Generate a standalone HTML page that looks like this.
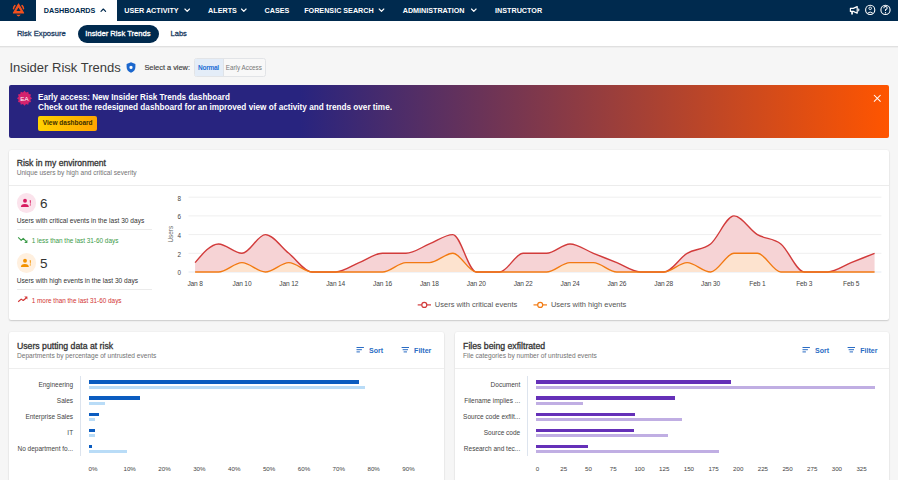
<!DOCTYPE html>
<html><head><meta charset="utf-8">
<style>
html,body{margin:0;padding:0;}
body{width:898px;height:480px;overflow:hidden;position:relative;background:#f6f6f6;font-family:"Liberation Sans", sans-serif;}
.t{position:absolute;white-space:nowrap;line-height:1;}
.r{position:absolute;}
svg.r{overflow:visible;}
</style></head><body>
<div class="r" style="left:0.00px;top:0.00px;width:898.00px;height:21.00px;background:#002a4e;"></div>
<div class="r" style="left:35.60px;top:0.00px;width:81.00px;height:21.00px;background:#fff;"></div>
<svg class="r" style="left:0;top:0" width="40" height="21" viewBox="0 0 40 21">
<path d="M18.5 3.9 L23.6 13.0 L13.4 13.0 Z" fill="#f4511e" stroke="#f4511e" stroke-width="1.1" stroke-linejoin="round"/>
<path d="M18.5 7.5 L20.6 11.1 L16.4 11.1 Z" fill="#002a4e"/>
<path d="M14.9 5.6 Q13.5 7.0 13.5 8.8" fill="none" stroke="#f4511e" stroke-width="1.5" stroke-linecap="round"/>
<path d="M22.1 5.6 Q23.5 7.0 23.5 8.8" fill="none" stroke="#f4511e" stroke-width="1.5" stroke-linecap="round"/>
<path d="M16.4 14.6 Q18.5 15.1 20.6 14.6 Q20.1 16.4 18.5 16.4 Q16.9 16.4 16.4 14.6 Z" fill="#f4511e"/>
</svg>
<div class="t" style="left:43.80px;top:6.91px;font-size:7.2px;color:#002a4e;font-weight:bold;">DASHBOARDS</div>
<svg class="r" style="left:0;top:0" width="898" height="21"><path d="M101.00 11.3 L103.30 9.0 L105.60 11.3" fill="none" stroke="#002a4e" stroke-width="1.15" stroke-linecap="round" stroke-linejoin="round"/></svg>
<div class="t" style="left:124.20px;top:6.91px;font-size:7.2px;color:#fff;font-weight:bold;">USER ACTIVITY</div>
<svg class="r" style="left:0;top:0" width="898" height="21"><path d="M184.90 9.0 L187.20 11.3 L189.50 9.0" fill="none" stroke="#fff" stroke-width="1.15" stroke-linecap="round" stroke-linejoin="round"/></svg>
<div class="t" style="left:208.10px;top:6.91px;font-size:7.2px;color:#fff;font-weight:bold;">ALERTS</div>
<svg class="r" style="left:0;top:0" width="898" height="21"><path d="M241.50 9.0 L243.80 11.3 L246.10 9.0" fill="none" stroke="#fff" stroke-width="1.15" stroke-linecap="round" stroke-linejoin="round"/></svg>
<div class="t" style="left:264.50px;top:6.91px;font-size:7.2px;color:#fff;font-weight:bold;">CASES</div>
<div class="t" style="left:304.20px;top:6.91px;font-size:7.2px;color:#fff;font-weight:bold;">FORENSIC SEARCH</div>
<svg class="r" style="left:0;top:0" width="898" height="21"><path d="M379.20 9.0 L381.50 11.3 L383.80 9.0" fill="none" stroke="#fff" stroke-width="1.15" stroke-linecap="round" stroke-linejoin="round"/></svg>
<div class="t" style="left:402.70px;top:6.91px;font-size:7.2px;color:#fff;font-weight:bold;">ADMINISTRATION</div>
<svg class="r" style="left:0;top:0" width="898" height="21"><path d="M471.50 9.0 L473.80 11.3 L476.10 9.0" fill="none" stroke="#fff" stroke-width="1.15" stroke-linecap="round" stroke-linejoin="round"/></svg>
<div class="t" style="left:495.10px;top:6.91px;font-size:7.2px;color:#fff;font-weight:bold;">INSTRUCTOR</div>
<svg class="r" style="left:845px;top:0" width="53" height="21" viewBox="845 0 53 21">
<path d="M850.4 8.4 H853.3 L857.2 6.6 V13.2 L853.3 11.4 H850.4 Z" fill="none" stroke="#fff" stroke-width="1.2" stroke-linejoin="round"/>
<rect x="851.2" y="11.4" width="1.7" height="3.1" fill="#fff"/>
<path d="M858.5 8.6 Q859.3 9.9 858.5 11.2" fill="none" stroke="#fff" stroke-width="1.1"/>
<circle cx="870.2" cy="9.9" r="4.6" fill="none" stroke="#fff" stroke-width="1.1"/>
<circle cx="870.2" cy="8.3" r="1.3" fill="none" stroke="#fff" stroke-width="0.9"/>
<path d="M867.5 13.2 Q870.2 10.9 872.9 13.2" fill="none" stroke="#fff" stroke-width="1.0"/>
<circle cx="885.5" cy="9.9" r="4.6" fill="none" stroke="#fff" stroke-width="1.1"/>
<path d="M883.8 8.2 Q883.8 6.4 885.5 6.4 Q887.2 6.4 887.2 8.0 Q887.2 9.1 885.5 9.8 L885.5 11.1" fill="none" stroke="#fff" stroke-width="1.05"/>
<circle cx="885.5" cy="12.8" r="0.7" fill="#fff"/>
</svg>
<div class="r" style="left:0.00px;top:21.00px;width:898.00px;height:25.00px;background:#fff;"></div>
<div class="r" style="left:0.00px;top:46.00px;width:898.00px;height:1.00px;background:#e0e0e0;"></div>
<div class="r" style="left:0.00px;top:47.00px;width:898.00px;height:1.00px;background:#eeeeee;"></div>
<div class="t" style="left:16.90px;top:30.17px;font-size:7.6px;color:#1c3d63;-webkit-text-stroke:0.3px #1c3d63;">Risk Exposure</div>
<div class="r" style="left:77.50px;top:25.30px;width:81.30px;height:17.40px;background:#002a4e;border-radius:9px;"></div>
<div class="t" style="left:85.30px;top:30.12px;font-size:7.65px;color:#fff;-webkit-text-stroke:0.3px #fff;">Insider Risk Trends</div>
<div class="t" style="left:170.60px;top:30.25px;font-size:7.5px;color:#1c3d63;-webkit-text-stroke:0.3px #1c3d63;">Labs</div>
<div class="t" style="left:9.40px;top:61.20px;font-size:13.0px;color:#3b3b3b;">Insider Risk Trends</div>
<svg class="r" style="left:126px;top:62px" width="10" height="11" viewBox="0 0 10 11">
<path d="M5 0.3 L9.4 1.9 L9.4 5 Q9.4 8.9 5 10.8 Q0.6 8.9 0.6 5 L0.6 1.9 Z" fill="#1b67cd"/>
<path d="M5 3.8 L6.5 4.6 L6.5 6.3 L5 7.2 L3.5 6.3 L3.5 4.6 Z" fill="#fff"/>
</svg>
<div class="t" style="left:144.40px;top:64.24px;font-size:7.4px;color:#3d3d3d;-webkit-text-stroke:0.15px #3d3d3d;">Select a view:</div>
<div class="r" style="left:194.30px;top:58.20px;width:71.40px;height:18.50px;background:#f8f8f8;border:1px solid #e2e4e7;border-radius:2.5px;box-sizing:border-box;"></div>
<div class="r" style="left:194.80px;top:58.70px;width:27.80px;height:17.50px;background:#e4edf8;"></div>
<div class="r" style="left:222.60px;top:58.70px;width:0.80px;height:17.50px;background:#dfe3e8;"></div>
<div class="t" style="left:198.00px;top:64.60px;font-size:6.5px;color:#1f6fd6;font-weight:bold;letter-spacing:-0.25px;">Normal</div>
<div class="t" style="left:225.80px;top:65.07px;font-size:6.3px;color:#777;">Early Access</div>
<div class="r" style="left:9.30px;top:85.00px;width:879.80px;height:52.80px;background:linear-gradient(90deg,#28247f 0%,#28247f 33%,#ff5500 100%);border-radius:2px;"></div>
<svg class="r" style="left:16px;top:90px" width="17" height="17" viewBox="-8.5 -8.3 17 17">
<path d="M0.00 7.50 L-1.55 5.80 L-3.75 6.50 L-4.24 4.24 L-6.50 3.75 L-5.80 1.55 L-7.50 0.00 L-5.80 -1.55 L-6.50 -3.75 L-4.24 -4.24 L-3.75 -6.50 L-1.55 -5.80 L-0.00 -7.50 L1.55 -5.80 L3.75 -6.50 L4.24 -4.24 L6.50 -3.75 L5.80 -1.55 L7.50 -0.00 L5.80 1.55 L6.50 3.75 L4.24 4.24 L3.75 6.50 L1.55 5.80" fill="#d4226d"/>
</svg>Z
<div class="t" style="left:-75.50px;width:200px;text-align:center;top:95.75px;font-size:6.2px;color:#fff;">EA</div>
<div class="t" style="left:38.00px;top:94.10px;font-size:8.15px;color:#fff;font-weight:bold;">Early access: New Insider Risk Trends dashboard</div>
<div class="t" style="left:38.00px;top:104.26px;font-size:8.2px;color:#fff;font-weight:bold;">Check out the redesigned dashboard for an improved view of activity and trends over time.</div>
<div class="r" style="left:38.00px;top:115.60px;width:59.30px;height:15.70px;background:linear-gradient(90deg,#ffd200,#ffa400);border-radius:2px;"></div>
<div class="t" style="left:42.80px;top:119.60px;font-size:6.5px;color:#3d3000;font-weight:bold;">View dashboard</div>
<svg class="r" style="left:873px;top:94px" width="9" height="9" viewBox="0 0 9 9">
<path d="M1 1 L7.6 7.6 M7.6 1 L1 7.6" stroke="#fff" stroke-width="1.05"/>
</svg>
<div class="r" style="left:8.90px;top:150.10px;width:880.30px;height:170.40px;background:#fff;border-radius:2px;box-shadow:0 0 2px rgba(0,0,0,0.07),0 1px 1.5px rgba(0,0,0,0.16);"></div>
<div class="t" style="left:16.70px;top:158.92px;font-size:8.6px;color:#333;-webkit-text-stroke:0.3px #333;">Risk in my environment</div>
<div class="t" style="left:16.70px;top:169.81px;font-size:6.6px;color:#737373;">Unique users by high and critical severity</div>
<div class="r" style="left:8.90px;top:185.00px;width:880.30px;height:1.00px;background:#ececec;"></div>
<div class="r" style="left:16.60px;top:193.00px;width:19.60px;height:19.60px;background:#fbe3ec;border-radius:50%;"></div>
<svg class="r" style="left:16.4px;top:192.8px" width="20" height="20" viewBox="0 0 20 20">
<circle cx="9.0" cy="7.8" r="1.95" fill="#d81b60"/>
<path d="M4.9 14.1 Q4.9 10.9 8.85 10.9 Q12.8 10.9 12.8 14.1 Z" fill="#d81b60"/>
<path d="M13.7 7.2 L14.9 7.2 L14.6 10.8 L14.0 10.8 Z" fill="#d81b60"/>
<circle cx="14.3" cy="11.9" r="0.6" fill="#d81b60"/>
</svg>
<div class="t" style="left:39.90px;top:197.27px;font-size:13.5px;color:#333;">6</div>
<div class="t" style="left:16.70px;top:218.41px;font-size:6.6px;color:#333;">Users with critical events in the last 30 days</div>
<div class="r" style="left:16.70px;top:229.00px;width:135.10px;height:1.00px;background:#ebebeb;"></div>
<svg class="r" style="left:17px;top:235px" width="12" height="9" viewBox="0 0 12 9">
<path d="M1.2 2.3 L4.2 5.3 L6.2 3.4 L9.2 6.4" fill="none" stroke="#3a9a47" stroke-width="1.15" stroke-linejoin="round"/>
<path d="M10.4 4.8 L10.4 8.0 L7.2 8.0 Z" fill="#3a9a47"/>
</svg>
<div class="t" style="left:31.70px;top:238.48px;font-size:6.4px;color:#3a9a47;">1 less than the last 31-60 days</div>
<div class="r" style="left:16.60px;top:253.00px;width:19.60px;height:19.60px;background:#fff0df;border-radius:50%;"></div>
<svg class="r" style="left:16.4px;top:252.8px" width="20" height="20" viewBox="0 0 20 20">
<circle cx="9.0" cy="7.8" r="1.95" fill="#f39200"/>
<path d="M4.9 14.1 Q4.9 10.9 8.85 10.9 Q12.8 10.9 12.8 14.1 Z" fill="#f39200"/>
<path d="M13.7 7.2 L14.9 7.2 L14.6 10.8 L14.0 10.8 Z" fill="#f39200"/>
<circle cx="14.3" cy="11.9" r="0.6" fill="#f39200"/>
</svg>
<div class="t" style="left:39.90px;top:257.27px;font-size:13.5px;color:#333;">5</div>
<div class="t" style="left:16.70px;top:278.41px;font-size:6.6px;color:#333;">Users with high events in the last 30 days</div>
<div class="r" style="left:16.70px;top:289.00px;width:135.10px;height:1.00px;background:#ebebeb;"></div>
<svg class="r" style="left:17px;top:295px" width="12" height="9" viewBox="0 0 12 9">
<path d="M1.2 6.8 L4.2 4.1 L6.2 5.5 L9.2 3.0" fill="none" stroke="#d23434" stroke-width="1.15" stroke-linejoin="round"/>
<path d="M10.4 4.6 L10.4 1.4 L7.2 1.4 Z" fill="#d23434"/>
</svg>
<div class="t" style="left:31.70px;top:298.48px;font-size:6.4px;color:#d23434;">1 more than the last 31-60 days</div>
<svg class="r" style="left:0;top:0" width="898" height="480"><line x1="188.5" y1="272.00" x2="881.4" y2="272.00" stroke="#e3e9f2" stroke-width="1"/><line x1="188.5" y1="253.30" x2="881.4" y2="253.30" stroke="#efefef" stroke-width="1"/><line x1="188.5" y1="234.60" x2="881.4" y2="234.60" stroke="#efefef" stroke-width="1"/><line x1="188.5" y1="215.90" x2="881.4" y2="215.90" stroke="#efefef" stroke-width="1"/><line x1="188.5" y1="197.20" x2="881.4" y2="197.20" stroke="#efefef" stroke-width="1"/><path d="M195.10,262.65 C202.91,253.30 210.72,243.95 218.53,243.95 C226.34,243.95 234.15,253.30 241.96,253.30 C249.77,253.30 257.58,234.60 265.39,234.60 C273.20,234.60 281.01,247.07 288.82,253.30 C296.63,259.53 304.44,272.00 312.25,272.00 C320.06,272.00 327.87,272.00 335.68,272.00 C343.49,272.00 351.30,265.77 359.11,262.65 C366.92,259.53 374.73,253.30 382.54,253.30 C390.35,253.30 398.16,253.30 405.97,253.30 C413.78,253.30 421.59,247.07 429.40,243.95 C437.21,240.83 445.02,234.60 452.83,234.60 C460.64,234.60 468.45,272.00 476.26,272.00 C484.07,272.00 491.88,272.00 499.69,272.00 C507.50,272.00 515.31,253.30 523.12,253.30 C530.93,253.30 538.74,253.30 546.55,253.30 C554.36,253.30 562.17,243.95 569.98,243.95 C577.79,243.95 585.60,250.18 593.41,253.30 C601.22,256.42 609.03,259.53 616.84,262.65 C624.65,265.77 632.46,272.00 640.27,272.00 C648.08,272.00 655.89,272.00 663.70,272.00 C671.51,272.00 679.32,257.98 687.13,253.30 C694.94,248.62 702.75,250.18 710.56,243.95 C718.37,237.72 726.18,215.90 733.99,215.90 C741.80,215.90 749.61,229.92 757.42,234.60 C765.23,239.28 773.04,237.72 780.85,243.95 C788.66,250.18 796.47,272.00 804.28,272.00 C812.09,272.00 819.90,272.00 827.71,272.00 C835.52,272.00 843.33,265.77 851.14,262.65 C858.95,259.53 866.76,256.42 874.57,253.30 L874.57,272.0 L195.10,272.0 Z" fill="#f6d3d5"/><path d="M195.10,272.00 C202.91,272.00 210.72,272.00 218.53,272.00 C226.34,272.00 234.15,262.65 241.96,262.65 C249.77,262.65 257.58,272.00 265.39,272.00 C273.20,272.00 281.01,262.65 288.82,262.65 C296.63,262.65 304.44,272.00 312.25,272.00 C320.06,272.00 327.87,272.00 335.68,272.00 C343.49,272.00 351.30,272.00 359.11,272.00 C366.92,272.00 374.73,272.00 382.54,272.00 C390.35,272.00 398.16,262.65 405.97,262.65 C413.78,262.65 421.59,262.65 429.40,262.65 C437.21,262.65 445.02,253.30 452.83,253.30 C460.64,253.30 468.45,272.00 476.26,272.00 C484.07,272.00 491.88,272.00 499.69,272.00 C507.50,272.00 515.31,272.00 523.12,272.00 C530.93,272.00 538.74,272.00 546.55,272.00 C554.36,272.00 562.17,262.65 569.98,262.65 C577.79,262.65 585.60,262.65 593.41,262.65 C601.22,262.65 609.03,272.00 616.84,272.00 C624.65,272.00 632.46,272.00 640.27,272.00 C648.08,272.00 655.89,272.00 663.70,272.00 C671.51,272.00 679.32,262.65 687.13,262.65 C694.94,262.65 702.75,272.00 710.56,272.00 C718.37,272.00 726.18,253.30 733.99,253.30 C741.80,253.30 749.61,253.30 757.42,253.30 C765.23,253.30 773.04,272.00 780.85,272.00 C788.66,272.00 796.47,272.00 804.28,272.00 C812.09,272.00 819.90,272.00 827.71,272.00 C835.52,272.00 843.33,272.00 851.14,272.00 C858.95,272.00 866.76,272.00 874.57,272.00 L874.57,272.0 L195.10,272.0 Z" fill="#fde3cf"/><path d="M195.10,262.65 C202.91,253.30 210.72,243.95 218.53,243.95 C226.34,243.95 234.15,253.30 241.96,253.30 C249.77,253.30 257.58,234.60 265.39,234.60 C273.20,234.60 281.01,247.07 288.82,253.30 C296.63,259.53 304.44,272.00 312.25,272.00 C320.06,272.00 327.87,272.00 335.68,272.00 C343.49,272.00 351.30,265.77 359.11,262.65 C366.92,259.53 374.73,253.30 382.54,253.30 C390.35,253.30 398.16,253.30 405.97,253.30 C413.78,253.30 421.59,247.07 429.40,243.95 C437.21,240.83 445.02,234.60 452.83,234.60 C460.64,234.60 468.45,272.00 476.26,272.00 C484.07,272.00 491.88,272.00 499.69,272.00 C507.50,272.00 515.31,253.30 523.12,253.30 C530.93,253.30 538.74,253.30 546.55,253.30 C554.36,253.30 562.17,243.95 569.98,243.95 C577.79,243.95 585.60,250.18 593.41,253.30 C601.22,256.42 609.03,259.53 616.84,262.65 C624.65,265.77 632.46,272.00 640.27,272.00 C648.08,272.00 655.89,272.00 663.70,272.00 C671.51,272.00 679.32,257.98 687.13,253.30 C694.94,248.62 702.75,250.18 710.56,243.95 C718.37,237.72 726.18,215.90 733.99,215.90 C741.80,215.90 749.61,229.92 757.42,234.60 C765.23,239.28 773.04,237.72 780.85,243.95 C788.66,250.18 796.47,272.00 804.28,272.00 C812.09,272.00 819.90,272.00 827.71,272.00 C835.52,272.00 843.33,265.77 851.14,262.65 C858.95,259.53 866.76,256.42 874.57,253.30" fill="none" stroke="#d23b3b" stroke-width="1.4"/><path d="M195.10,272.00 C202.91,272.00 210.72,272.00 218.53,272.00 C226.34,272.00 234.15,262.65 241.96,262.65 C249.77,262.65 257.58,272.00 265.39,272.00 C273.20,272.00 281.01,262.65 288.82,262.65 C296.63,262.65 304.44,272.00 312.25,272.00 C320.06,272.00 327.87,272.00 335.68,272.00 C343.49,272.00 351.30,272.00 359.11,272.00 C366.92,272.00 374.73,272.00 382.54,272.00 C390.35,272.00 398.16,262.65 405.97,262.65 C413.78,262.65 421.59,262.65 429.40,262.65 C437.21,262.65 445.02,253.30 452.83,253.30 C460.64,253.30 468.45,272.00 476.26,272.00 C484.07,272.00 491.88,272.00 499.69,272.00 C507.50,272.00 515.31,272.00 523.12,272.00 C530.93,272.00 538.74,272.00 546.55,272.00 C554.36,272.00 562.17,262.65 569.98,262.65 C577.79,262.65 585.60,262.65 593.41,262.65 C601.22,262.65 609.03,272.00 616.84,272.00 C624.65,272.00 632.46,272.00 640.27,272.00 C648.08,272.00 655.89,272.00 663.70,272.00 C671.51,272.00 679.32,262.65 687.13,262.65 C694.94,262.65 702.75,272.00 710.56,272.00 C718.37,272.00 726.18,253.30 733.99,253.30 C741.80,253.30 749.61,253.30 757.42,253.30 C765.23,253.30 773.04,272.00 780.85,272.00 C788.66,272.00 796.47,272.00 804.28,272.00 C812.09,272.00 819.90,272.00 827.71,272.00 C835.52,272.00 843.33,272.00 851.14,272.00 C858.95,272.00 866.76,272.00 874.57,272.00" fill="none" stroke="#f27a12" stroke-width="1.4"/><line x1="417.7" y1="304.9" x2="431" y2="304.9" stroke="#d23b3b" stroke-width="1.2"/><circle cx="424.3" cy="304.9" r="2.5" fill="#fff" stroke="#d23b3b" stroke-width="1.2"/><line x1="533.5" y1="304.9" x2="547" y2="304.9" stroke="#f27a12" stroke-width="1.2"/><circle cx="540.2" cy="304.9" r="2.5" fill="#fff" stroke="#f27a12" stroke-width="1.2"/></svg>
<div class="t" style="left:79.20px;width:200px;text-align:center;top:270.37px;font-size:6.3px;color:#444;">0</div>
<div class="t" style="left:79.20px;width:200px;text-align:center;top:251.67px;font-size:6.3px;color:#444;">2</div>
<div class="t" style="left:79.20px;width:200px;text-align:center;top:232.97px;font-size:6.3px;color:#444;">4</div>
<div class="t" style="left:79.20px;width:200px;text-align:center;top:214.27px;font-size:6.3px;color:#444;">6</div>
<div class="t" style="left:79.20px;width:200px;text-align:center;top:195.57px;font-size:6.3px;color:#444;">8</div>
<div class="t" style="left:70.50px;width:200px;text-align:center;top:231.08px;font-size:6.4px;color:#666;transform:rotate(-90deg);">Users</div>
<div class="t" style="left:95.10px;width:200px;text-align:center;top:281.31px;font-size:6.6px;color:#444;letter-spacing:-0.15px;">Jan 8</div>
<div class="t" style="left:141.96px;width:200px;text-align:center;top:281.31px;font-size:6.6px;color:#444;letter-spacing:-0.15px;">Jan 10</div>
<div class="t" style="left:188.82px;width:200px;text-align:center;top:281.31px;font-size:6.6px;color:#444;letter-spacing:-0.15px;">Jan 12</div>
<div class="t" style="left:235.68px;width:200px;text-align:center;top:281.31px;font-size:6.6px;color:#444;letter-spacing:-0.15px;">Jan 14</div>
<div class="t" style="left:282.54px;width:200px;text-align:center;top:281.31px;font-size:6.6px;color:#444;letter-spacing:-0.15px;">Jan 16</div>
<div class="t" style="left:329.40px;width:200px;text-align:center;top:281.31px;font-size:6.6px;color:#444;letter-spacing:-0.15px;">Jan 18</div>
<div class="t" style="left:376.26px;width:200px;text-align:center;top:281.31px;font-size:6.6px;color:#444;letter-spacing:-0.15px;">Jan 20</div>
<div class="t" style="left:423.12px;width:200px;text-align:center;top:281.31px;font-size:6.6px;color:#444;letter-spacing:-0.15px;">Jan 22</div>
<div class="t" style="left:469.98px;width:200px;text-align:center;top:281.31px;font-size:6.6px;color:#444;letter-spacing:-0.15px;">Jan 24</div>
<div class="t" style="left:516.84px;width:200px;text-align:center;top:281.31px;font-size:6.6px;color:#444;letter-spacing:-0.15px;">Jan 26</div>
<div class="t" style="left:563.70px;width:200px;text-align:center;top:281.31px;font-size:6.6px;color:#444;letter-spacing:-0.15px;">Jan 28</div>
<div class="t" style="left:610.56px;width:200px;text-align:center;top:281.31px;font-size:6.6px;color:#444;letter-spacing:-0.15px;">Jan 30</div>
<div class="t" style="left:657.42px;width:200px;text-align:center;top:281.31px;font-size:6.6px;color:#444;letter-spacing:-0.15px;">Feb 1</div>
<div class="t" style="left:704.28px;width:200px;text-align:center;top:281.31px;font-size:6.6px;color:#444;letter-spacing:-0.15px;">Feb 3</div>
<div class="t" style="left:751.14px;width:200px;text-align:center;top:281.31px;font-size:6.6px;color:#444;letter-spacing:-0.15px;">Feb 5</div>
<div class="t" style="left:434.80px;top:301.25px;font-size:7.5px;color:#555;">Users with critical events</div>
<div class="t" style="left:550.90px;top:301.25px;font-size:7.5px;color:#555;">Users with high events</div>
<div class="r" style="left:9.10px;top:332.30px;width:434.70px;height:167.70px;background:#fff;border-radius:2px;box-shadow:0 0 2px rgba(0,0,0,0.07),0 1px 1.5px rgba(0,0,0,0.16);"></div>
<div class="t" style="left:17.00px;top:341.64px;font-size:8.7px;color:#333;-webkit-text-stroke:0.3px #333;">Users putting data at risk</div>
<div class="t" style="left:17.00px;top:352.51px;font-size:6.6px;color:#737373;">Departments by percentage of untrusted events</div>
<div class="r" style="left:9.10px;top:367.60px;width:434.70px;height:1.20px;background:#eeeeee;"></div>
<svg class="r" style="left:355px;top:345px" width="80" height="10" viewBox="0 0 80 10">
<rect x="1.5" y="2" width="7.4" height="1" fill="#2a6cc4"/><rect x="1.5" y="4.2" width="5.4" height="1" fill="#2a6cc4"/><rect x="1.5" y="6.4" width="3.4" height="1" fill="#2a6cc4"/>
<rect x="46.6" y="2" width="7.4" height="1" fill="#2a6cc4"/><rect x="47.6" y="4.2" width="5.4" height="1" fill="#2a6cc4"/><rect x="48.6" y="6.4" width="3.4" height="1" fill="#2a6cc4"/>
</svg>
<div class="t" style="left:369.00px;top:346.83px;font-size:7.05px;color:#2a6cc4;font-weight:bold;">Sort</div>
<div class="t" style="left:414.10px;top:346.83px;font-size:7.05px;color:#2a6cc4;font-weight:bold;">Filter</div>
<div class="r" style="left:80.30px;top:375.80px;width:0.80px;height:80.20px;background:#dde4ee;"></div>
<div class="t" style="right:824.90px;top:381.50px;font-size:6.5px;color:#444;">Engineering</div>
<div class="r" style="left:88.60px;top:380.30px;width:270.16px;height:3.50px;background:#0b5cc0;"></div>
<div class="r" style="left:88.60px;top:385.50px;width:276.79px;height:3.20px;background:#b9dcf7;"></div>
<div class="t" style="right:824.90px;top:397.60px;font-size:6.5px;color:#444;">Sales</div>
<div class="r" style="left:88.60px;top:396.40px;width:51.59px;height:3.50px;background:#0b5cc0;"></div>
<div class="r" style="left:88.60px;top:401.60px;width:16.73px;height:3.20px;background:#b9dcf7;"></div>
<div class="t" style="right:824.90px;top:413.70px;font-size:6.5px;color:#444;">Enterprise Sales</div>
<div class="r" style="left:88.60px;top:412.50px;width:10.46px;height:3.50px;background:#0b5cc0;"></div>
<div class="r" style="left:88.60px;top:417.70px;width:6.27px;height:3.20px;background:#b9dcf7;"></div>
<div class="t" style="right:824.90px;top:429.80px;font-size:6.5px;color:#444;">IT</div>
<div class="r" style="left:88.60px;top:428.60px;width:6.27px;height:3.50px;background:#0b5cc0;"></div>
<div class="r" style="left:88.60px;top:433.80px;width:6.27px;height:3.20px;background:#b9dcf7;"></div>
<div class="t" style="right:824.90px;top:445.90px;font-size:6.5px;color:#444;">No department fo...</div>
<div class="r" style="left:88.60px;top:444.70px;width:3.14px;height:3.50px;background:#0b5cc0;"></div>
<div class="r" style="left:88.60px;top:449.90px;width:38.35px;height:3.20px;background:#b9dcf7;"></div>
<div class="t" style="left:88.60px;top:465.75px;font-size:6.2px;color:#444;">0%</div>
<div class="t" style="left:123.46px;top:465.75px;font-size:6.2px;color:#444;">10%</div>
<div class="t" style="left:158.32px;top:465.75px;font-size:6.2px;color:#444;">20%</div>
<div class="t" style="left:193.18px;top:465.75px;font-size:6.2px;color:#444;">30%</div>
<div class="t" style="left:228.04px;top:465.75px;font-size:6.2px;color:#444;">40%</div>
<div class="t" style="left:262.90px;top:465.75px;font-size:6.2px;color:#444;">50%</div>
<div class="t" style="left:297.76px;top:465.75px;font-size:6.2px;color:#444;">60%</div>
<div class="t" style="left:332.62px;top:465.75px;font-size:6.2px;color:#444;">70%</div>
<div class="t" style="left:367.48px;top:465.75px;font-size:6.2px;color:#444;">80%</div>
<div class="t" style="left:402.34px;top:465.75px;font-size:6.2px;color:#444;">90%</div>
<div class="r" style="left:455.20px;top:332.30px;width:434.00px;height:167.70px;background:#fff;border-radius:2px;box-shadow:0 0 2px rgba(0,0,0,0.07),0 1px 1.5px rgba(0,0,0,0.16);"></div>
<div class="t" style="left:463.10px;top:341.64px;font-size:8.7px;color:#333;-webkit-text-stroke:0.3px #333;">Files being exfiltrated</div>
<div class="t" style="left:463.10px;top:352.51px;font-size:6.6px;color:#737373;">File categories by number of untrusted events</div>
<div class="r" style="left:455.20px;top:367.60px;width:434.00px;height:1.20px;background:#eeeeee;"></div>
<svg class="r" style="left:801.1px;top:345px" width="80" height="10" viewBox="0 0 80 10">
<rect x="1.5" y="2" width="7.4" height="1" fill="#2a6cc4"/><rect x="1.5" y="4.2" width="5.4" height="1" fill="#2a6cc4"/><rect x="1.5" y="6.4" width="3.4" height="1" fill="#2a6cc4"/>
<rect x="46.6" y="2" width="7.4" height="1" fill="#2a6cc4"/><rect x="47.6" y="4.2" width="5.4" height="1" fill="#2a6cc4"/><rect x="48.6" y="6.4" width="3.4" height="1" fill="#2a6cc4"/>
</svg>
<div class="t" style="left:815.10px;top:346.83px;font-size:7.05px;color:#2a6cc4;font-weight:bold;">Sort</div>
<div class="t" style="left:860.20px;top:346.83px;font-size:7.05px;color:#2a6cc4;font-weight:bold;">Filter</div>
<div class="r" style="left:527.40px;top:375.80px;width:0.80px;height:80.20px;background:#dde4ee;"></div>
<div class="t" style="right:377.80px;top:381.50px;font-size:6.5px;color:#444;">Document</div>
<div class="r" style="left:535.70px;top:380.30px;width:195.39px;height:3.50px;background:#6530b8;"></div>
<div class="r" style="left:535.70px;top:385.50px;width:339.46px;height:3.20px;background:#c0aee3;"></div>
<div class="t" style="right:377.80px;top:397.60px;font-size:6.5px;color:#444;">Filename implies ...</div>
<div class="r" style="left:535.70px;top:396.40px;width:139.14px;height:3.50px;background:#6530b8;"></div>
<div class="r" style="left:535.70px;top:401.60px;width:47.37px;height:3.20px;background:#c0aee3;"></div>
<div class="t" style="right:377.80px;top:413.70px;font-size:6.5px;color:#444;">Source code exfilt...</div>
<div class="r" style="left:535.70px;top:412.50px;width:99.67px;height:3.50px;background:#6530b8;"></div>
<div class="r" style="left:535.70px;top:417.70px;width:146.05px;height:3.20px;background:#c0aee3;"></div>
<div class="t" style="right:377.80px;top:429.80px;font-size:6.5px;color:#444;">Source code</div>
<div class="r" style="left:535.70px;top:428.60px;width:98.68px;height:3.50px;background:#6530b8;"></div>
<div class="r" style="left:535.70px;top:433.80px;width:132.23px;height:3.20px;background:#c0aee3;"></div>
<div class="t" style="right:377.80px;top:445.90px;font-size:6.5px;color:#444;">Research and tec...</div>
<div class="r" style="left:535.70px;top:444.70px;width:52.30px;height:3.50px;background:#6530b8;"></div>
<div class="r" style="left:535.70px;top:449.90px;width:183.54px;height:3.20px;background:#c0aee3;"></div>
<div class="t" style="left:535.70px;top:465.75px;font-size:6.2px;color:#444;">0</div>
<div class="t" style="left:560.37px;top:465.75px;font-size:6.2px;color:#444;">25</div>
<div class="t" style="left:585.04px;top:465.75px;font-size:6.2px;color:#444;">50</div>
<div class="t" style="left:609.71px;top:465.75px;font-size:6.2px;color:#444;">75</div>
<div class="t" style="left:634.38px;top:465.75px;font-size:6.2px;color:#444;">100</div>
<div class="t" style="left:659.05px;top:465.75px;font-size:6.2px;color:#444;">125</div>
<div class="t" style="left:683.72px;top:465.75px;font-size:6.2px;color:#444;">150</div>
<div class="t" style="left:708.39px;top:465.75px;font-size:6.2px;color:#444;">175</div>
<div class="t" style="left:733.06px;top:465.75px;font-size:6.2px;color:#444;">200</div>
<div class="t" style="left:757.73px;top:465.75px;font-size:6.2px;color:#444;">225</div>
<div class="t" style="left:782.40px;top:465.75px;font-size:6.2px;color:#444;">250</div>
<div class="t" style="left:807.07px;top:465.75px;font-size:6.2px;color:#444;">275</div>
<div class="t" style="left:831.74px;top:465.75px;font-size:6.2px;color:#444;">300</div>
<div class="t" style="left:856.41px;top:465.75px;font-size:6.2px;color:#444;">325</div>
</body></html>
